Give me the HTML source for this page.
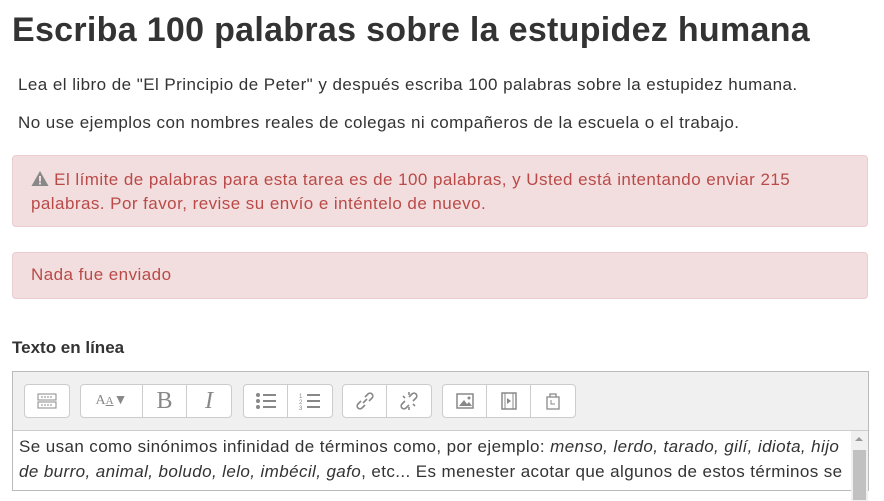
<!DOCTYPE html>
<html><head><meta charset="utf-8"><style>
*{box-sizing:border-box;margin:0;padding:0}
body{width:884px;height:486px;overflow:hidden;background:#fff;font-family:"Liberation Sans",Arial,sans-serif;color:#333;position:relative;letter-spacing:0.45px}
h1{position:absolute;left:12px;top:11px;font-size:34px;font-weight:bold;color:#333;letter-spacing:0.3px}
p{position:absolute;left:18px;font-size:17px;color:#333}
.alert{position:absolute;left:12px;width:856px;background:#f2dede;border:1px solid #ebccd1;border-radius:4px;color:#b94a48;font-size:17px}
.lbl{position:absolute;left:12px;top:338px;font-size:17px;font-weight:bold;color:#333;letter-spacing:0}
.ed{position:absolute;left:12px;top:371px;width:857px;height:120px;border:1px solid #bbb}
.tb{height:59px;background:#f0f0f0;border-bottom:1px solid #ccc;position:relative}
.g{position:absolute;top:12px;height:34px;border:1px solid #ccc;border-radius:4px;background:#fff;display:flex;letter-spacing:0}
.g div{width:44px;height:32px;border-right:1px solid #ccc;display:flex;align-items:center;justify-content:center;color:#888}
.g div:last-child{border-right:none}
.txt{padding:3px 6px;font-size:17px;line-height:25px;color:#333;width:842px;letter-spacing:0.4px}
.sb{position:absolute;right:0;top:59px;width:17px;height:70px;background:#f0f0f0}
.th{position:absolute;left:2px;top:19px;width:13px;height:50px;background:#c1c1c1}
</style></head><body>
<h1>Escriba 100 palabras sobre la estupidez humana</h1>
<p style="top:75px">Lea el libro de "El Principio de Peter" y después escriba 100 palabras sobre la estupidez humana.</p>
<p style="top:113px">No use ejemplos con nombres reales de colegas ni compañeros de la escuela o el trabajo.</p>
<div class="alert" style="top:155px;height:72px;padding:12px 60px 0 18px;line-height:24px">
<svg width="18" height="17" viewBox="0 0 18 17" style="vertical-align:-2px"><path d="M9 1L17.5 16H0.5Z" fill="#888"/><rect x="8" y="6" width="2" height="5.5" fill="#f2dede"/><rect x="8" y="12.5" width="2" height="2" fill="#f2dede"/></svg> El límite de palabras para esta tarea es de 100 palabras, y Usted está intentando enviar 215 palabras. Por favor, revise su envío e inténtelo de nuevo.</div>
<div class="alert" style="top:252px;height:47px;padding:12px 18px">Nada fue enviado</div>
<div class="lbl">Texto en línea</div>
<div class="ed">
<div class="tb">
<div class="g" style="left:11px"><div><svg width="20" height="16"><rect x="1" y="1" width="18" height="6" fill="none" stroke="#888"/><rect x="1" y="9" width="18" height="6" fill="none" stroke="#888"/><path d="M4 4h12M4 12h12" stroke="#888" stroke-dasharray="2 1"/></svg></div></div>
<div class="g" style="left:67px"><div style="width:62px;font-family:'Liberation Serif';font-size:14px">A<sub style="font-size:11px;text-decoration:underline">A</sub>&#9660;</div><div style="font-family:'Liberation Serif';font-size:24px">B</div><div style="font-family:'Liberation Serif';font-size:24px;font-style:italic">I</div></div>
<div class="g" style="left:230px"><div><svg width="22" height="18"><circle cx="3" cy="3" r="2" fill="#888"/><circle cx="3" cy="9" r="2" fill="#888"/><circle cx="3" cy="15" r="2" fill="#888"/><path d="M8 3h13M8 9h13M8 15h13" stroke="#888" stroke-width="2"/></svg></div><div><svg width="22" height="18"><text x="0" y="6" font-size="6" fill="#888">1</text><text x="0" y="12" font-size="6" fill="#888">2</text><text x="0" y="18" font-size="6" fill="#888">3</text><path d="M8 3h13M8 9h13M8 15h13" stroke="#888" stroke-width="2"/></svg></div></div>
<div class="g" style="left:329px"><div><svg width="20" height="20"><path d="M8 12l4-4M6 10l-3 3a2.5 2.5 0 0 0 4 4l3-3M14 10l3-3a2.5 2.5 0 0 0-4-4l-3 3" stroke="#888" stroke-width="1.6" fill="none"/></svg></div><div><svg width="20" height="20"><path d="M6 10l-3 3a2.5 2.5 0 0 0 4 4l3-3M14 10l3-3a2.5 2.5 0 0 0-4-4l-3 3M4 5l2 2M16 15l-2-2M10 1v3M10 16v3" stroke="#888" stroke-width="1.6" fill="none"/></svg></div></div>
<div class="g" style="left:429px"><div><svg width="18" height="16"><rect x="1" y="1" width="16" height="14" fill="none" stroke="#888" stroke-width="1.5"/><path d="M3 13l5-6 3 4 2-2 3 4z" fill="#888"/><circle cx="13" cy="5" r="1.5" fill="#888"/></svg></div><div><svg width="16" height="18"><rect x="1" y="1" width="14" height="16" fill="none" stroke="#888" stroke-width="1.5"/><path d="M4 1v16M12 1v16" stroke="#888"/><path d="M6 6l4 3-4 3z" fill="#888"/></svg></div><div><svg width="16" height="18"><path d="M2 5h12v12H2zM5 5V2h6v3" fill="none" stroke="#888" stroke-width="1.3"/><path d="M6 8v4h4" fill="none" stroke="#888"/></svg></div></div>
</div>
<div class="txt">Se usan como sinónimos infinidad de términos como, por ejemplo: <i>menso, lerdo, tarado, gilí, idiota, hijo de burro, animal, boludo, lelo, imbécil, gafo</i>, etc... Es menester acotar que algunos de estos términos se</div>
<div class="sb"><div style="position:absolute;left:4px;top:6px;border:4px solid transparent;border-bottom:4px solid #999;border-top:none;width:0"></div><div class="th"></div></div>
</div>
</body></html>
